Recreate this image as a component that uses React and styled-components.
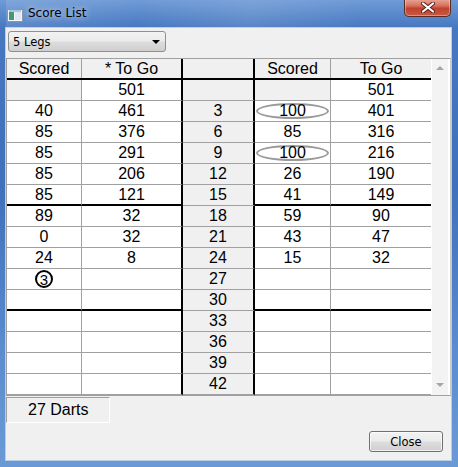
import React from 'react'
import styled, { createGlobalStyle } from 'styled-components'

const GlobalStyle = createGlobalStyle`
  html, body {
    margin: 0;
    padding: 0;
    background: #ffffff;
  }
  body {
    font-family: "Liberation Sans", Arial, sans-serif;
  }
`

const COLS = [75, 101, 72, 76, 100]

const leftLegs = [
  [null, '501'], ['40', '461'], ['85', '376'], ['85', '291'], ['85', '206'],
  ['85', '121'], ['89', '32'], ['0', '32'], ['24', '8'], ['@3', ''],
  ['', ''], ['', ''], ['', ''], ['', ''], ['', ''],
]

const rightLegs = [
  [null, '501'], ['!100', '401'], ['85', '316'], ['!100', '216'], ['26', '190'],
  ['41', '149'], ['59', '90'], ['43', '47'], ['15', '32'], ['', ''],
  ['', ''], ['', ''], ['', ''], ['', ''], ['', ''],
]

function CellValue({ value }) {
  if (!value) return null
  if (value.startsWith('@')) return <Circled>{value.slice(1)}</Circled>
  if (value.startsWith('!')) return <Ton>{value.slice(1)}</Ton>
  return value
}

function App() {
  return (
    <>
      <GlobalStyle />
      <Window>
        <TitleBar>
          <TitleIcon width="16" height="13" viewBox="0 0 16 13">
            <rect x="0.5" y="0.5" width="15" height="12" fill="#f4f6f8" stroke="#8a96a4" />
            <rect x="2" y="3" width="5" height="8" fill="#3f9a7a" />
            <rect x="8" y="3" width="6" height="8" fill="#dfe8f2" />
            <rect x="2" y="1.5" width="12" height="1" fill="#6b8fbf" />
          </TitleIcon>
          <Title>Score List</Title>
          <CloseX>
            <svg width="14" height="11" viewBox="0 0 14 11">
              <path d="M2 1.5 L12 9.5 M12 1.5 L2 9.5" stroke="#5a2018" strokeWidth="4" strokeLinecap="round" />
              <path d="M2 1.5 L12 9.5 M12 1.5 L2 9.5" stroke="#ffffff" strokeWidth="2.2" strokeLinecap="round" />
            </svg>
          </CloseX>
        </TitleBar>
        <Client>
          <Toolbar>
            <Combo>
              <span>5 Legs</span>
              <ComboArrow />
            </Combo>
          </Toolbar>
          <GridPanel>
            <Table>
              <HeaderRow>
                <HeadCell $col={0}>Scored</HeadCell>
                <HeadCell $col={1}>* To Go</HeadCell>
                <HeadCell $col={2} />
                <HeadCell $col={3}>Scored</HeadCell>
                <HeadCell $col={4}>To Go</HeadCell>
              </HeaderRow>
              {leftLegs.map((row, i) => {
                const thick = i === 5 || i === 10
                const right = rightLegs[i]
                return (
                  <Row key={i}>
                    <Cell $col={0} $thick={thick} $shaded={row[0] === null}>
                      <CellValue value={row[0]} />
                    </Cell>
                    <Cell $col={1} $thick={thick}>{row[1]}</Cell>
                    <DartCell>{i > 0 ? i * 3 : ''}</DartCell>
                    <Cell $col={3} $thick={thick} $shaded={right[0] === null}>
                      <CellValue value={right[0]} />
                    </Cell>
                    <Cell $col={4} $thick={thick}>{right[1]}</Cell>
                  </Row>
                )
              })}
            </Table>
            <ScrollBar>
              <ArrowUp />
              <ArrowDown />
            </ScrollBar>
          </GridPanel>
          <Status>27 Darts</Status>
          <Footer>
            <Button>Close</Button>
          </Footer>
        </Client>
      </Window>
    </>
  )
}

export default App

const Window = styled.div`
  width: 458px;
  height: 467px;
  box-sizing: border-box;
  padding: 0 7px 7px 6px;
  display: flex;
  flex-direction: column;
  background: linear-gradient(180deg, #6f9bd6 0%, #4677c0 6%, #3f70bb 40%, #5a8ccf 75%, #6a9ad6 100%);
`

const TitleBar = styled.div`
  height: 28px;
  display: flex;
  align-items: flex-start;
  position: relative;
  background: linear-gradient(100deg, rgba(255,255,255,0.12) 0%, rgba(255,255,255,0) 30%, rgba(255,255,255,0.1) 55%, rgba(255,255,255,0) 80%);
`

const TitleIcon = styled.svg`
  margin: 9px 0 0 1px;
  flex-shrink: 0;
`

const Title = styled.div`
  margin: 6px 0 0 5px;
  font-family: "DejaVu Sans", "Liberation Sans", sans-serif;
  font-size: 12px;
  color: #000;
  text-shadow: 0 0 6px rgba(255,255,255,0.9);
`

const CloseX = styled.div`
  position: absolute;
  right: 0;
  top: -1px;
  width: 47px;
  height: 18px;
  box-sizing: border-box;
  border: 1px solid #5c2a22;
  border-top: none;
  border-radius: 0 0 5px 5px;
  background: linear-gradient(180deg, #e9a99a 0%, #d7705d 40%, #c2412c 55%, #c85a44 100%);
  display: flex;
  align-items: center;
  justify-content: center;
  box-shadow: inset 0 0 0 1px rgba(255,255,255,0.35);
`

const Client = styled.div`
  flex: 1;
  background: #f0f0f0;
  display: flex;
  flex-direction: column;
  box-shadow: 0 0 0 1px #b9cde8;
`

const Toolbar = styled.div`
  padding: 3px 0 0 2px;
  height: 30px;
  box-sizing: border-box;
`

const Combo = styled.div`
  width: 158px;
  height: 21px;
  box-sizing: border-box;
  border: 1px solid #8e8f8f;
  border-radius: 3px;
  background: linear-gradient(180deg, #f2f2f2 0%, #ebebeb 48%, #dddddd 52%, #cfcfcf 100%);
  display: flex;
  align-items: center;
  justify-content: space-between;
  padding: 0 5px 0 4px;
  font-family: "DejaVu Sans", "Liberation Sans", sans-serif;
  font-size: 11.5px;
  color: #000;
`

const ComboArrow = styled.span`
  width: 0;
  height: 0;
  border-left: 4px solid transparent;
  border-right: 4px solid transparent;
  border-top: 4px solid #000;
`

const GridPanel = styled.div`
  width: 443px;
  display: flex;
  border: 1px solid #a0a0a0;
  border-right-color: #c8c8c8;
  background: #ffffff;
`

const Table = styled.div`
  width: 424px;
  display: flex;
  flex-direction: column;
  font-family: "Liberation Sans", Arial, sans-serif;
  font-size: 16px;
  color: #000;
`

const HeaderRow = styled.div`
  display: flex;
  height: 21px;
  border-bottom: 2px solid #000;
  box-sizing: border-box;
  background: #f0f0f0;
`

const HeadCell = styled.div`
  width: ${p => COLS[p.$col]}px;
  box-sizing: border-box;
  display: flex;
  align-items: center;
  justify-content: center;
  line-height: 19px;
  border-right: ${p => (p.$col === 1 || p.$col === 2 ? '2px solid #000' : p.$col === 4 ? 'none' : '1px solid #a0a0a0')};
`

const Row = styled.div`
  display: flex;
  height: 21px;
`

const Cell = styled.div`
  width: ${p => COLS[p.$col]}px;
  height: 21px;
  box-sizing: border-box;
  display: flex;
  align-items: center;
  justify-content: center;
  background: ${p => (p.$shaded ? '#f0f0f0' : '#ffffff')};
  border-bottom: ${p => (p.$thick ? '2px solid #000' : '1px solid #a0a0a0')};
  border-right: ${p => (p.$col === 1 ? '2px solid #000' : p.$col === 4 ? 'none' : '1px solid #a0a0a0')};
  padding-top: ${p => (p.$thick ? '1px' : '0')};
`

const DartCell = styled.div`
  width: ${COLS[2]}px;
  height: 21px;
  box-sizing: border-box;
  display: flex;
  align-items: center;
  justify-content: center;
  background: #f0f0f0;
  border-bottom: 1px solid #a0a0a0;
  border-right: 2px solid #000;
`

const Circled = styled.span`
  width: 18px;
  height: 18px;
  box-sizing: border-box;
  border: 2px solid #000;
  border-radius: 50%;
  display: flex;
  align-items: center;
  justify-content: center;
  font-size: 15px;
  line-height: 1;
`

const Ton = styled.span`
  width: 73px;
  height: 16px;
  box-sizing: border-box;
  border: 2px solid #9a9a9a;
  border-radius: 50%;
  display: flex;
  align-items: center;
  justify-content: center;
  line-height: 1;
`

const ScrollBar = styled.div`
  width: 17px;
  background: #f3f3f3;
  border-left: 1px solid #ffffff;
  box-sizing: border-box;
  display: flex;
  flex-direction: column;
  justify-content: space-between;
  align-items: center;
  padding: 7px 0 8px;
`

const ArrowUp = styled.span`
  width: 0;
  height: 0;
  border-left: 4px solid transparent;
  border-right: 4px solid transparent;
  border-bottom: 4px solid #a5a5a5;
`

const ArrowDown = styled.span`
  width: 0;
  height: 0;
  border-left: 4px solid transparent;
  border-right: 4px solid transparent;
  border-top: 4px solid #a5a5a5;
`

const Status = styled.div`
  margin-top: 1px;
  width: 104px;
  height: 26px;
  box-sizing: border-box;
  border-top: 1px solid #a0a0a0;
  border-left: 1px solid #a0a0a0;
  border-right: 1px solid #ffffff;
  border-bottom: 1px solid #ffffff;
  display: flex;
  align-items: center;
  padding-left: 21px;
  font-family: "Liberation Sans", Arial, sans-serif;
  font-size: 16px;
  color: #000;
`

const Footer = styled.div`
  display: flex;
  justify-content: flex-end;
  padding: 8px 8px 0 0;
`

const Button = styled.div`
  width: 74px;
  height: 21px;
  box-sizing: border-box;
  border: 1px solid #707070;
  border-radius: 3px;
  background: linear-gradient(180deg, #f2f2f2 0%, #ebebeb 48%, #dddddd 52%, #cfcfcf 100%);
  box-shadow: inset 0 0 0 1px rgba(255,255,255,0.7);
  display: flex;
  align-items: center;
  justify-content: center;
  font-family: "DejaVu Sans", "Liberation Sans", sans-serif;
  font-size: 11.5px;
  color: #000;
`
